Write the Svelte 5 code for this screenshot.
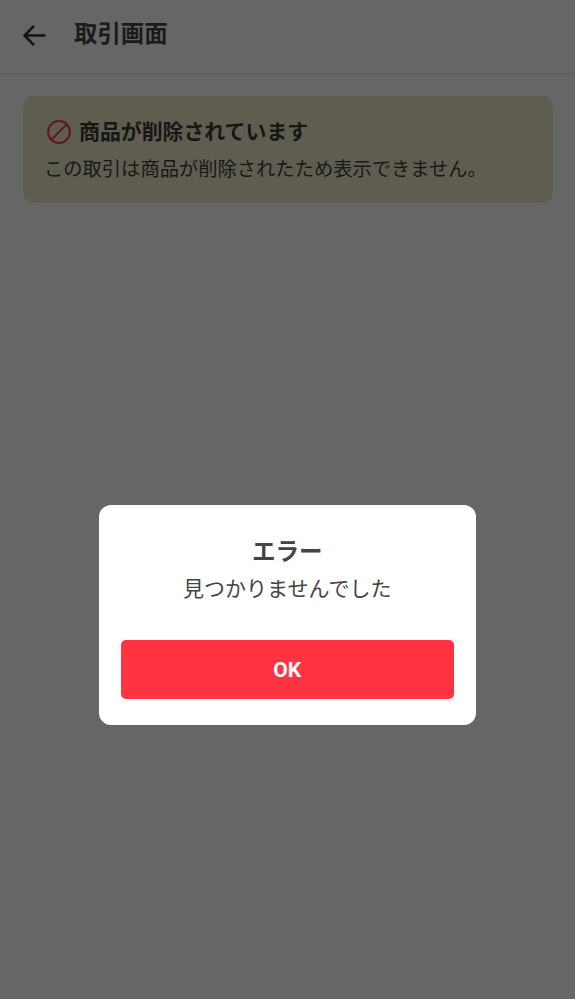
<script lang="ts">
  let showError = $state(true);
</script>

<div class="page">
  <header class="bar">
    <button class="back" aria-label="戻る">
      <svg viewBox="0 0 24 24" width="24" height="24" aria-hidden="true">
        <path d="M22.5 12H2.5M11.5 2.8L2.5 12l9 9.2" />
      </svg>
    </button>
    <h1>取引画面</h1>
  </header>

  <main>
    <section class="notice">
      <div class="notice-head">
        <svg viewBox="0 0 24 24" width="24" height="24" aria-hidden="true">
          <circle cx="12" cy="12" r="10.9" />
          <path d="M4.6 19.4L19.4 4.6" />
        </svg>
        <h2>商品が削除されています</h2>
      </div>
      <p>この取引は商品が削除されたため表示できません。</p>
    </section>
  </main>
</div>

{#if showError}
  <div class="overlay">
    <div class="dialog" role="alertdialog" aria-label="エラー">
      <h3>エラー</h3>
      <p>見つかりませんでした</p>
      <button class="ok" onclick={() => (showError = false)}>OK</button>
    </div>
  </div>
{/if}

<style>
  :global(body) {
    background: #fff;
    font-family: Roboto, "Noto Sans CJK JP", sans-serif;
    color: #444;
  }

  .page {
    min-height: 999px;
  }

  .bar {
    display: flex;
    align-items: center;
    gap: 26px;
    height: 69px;
    padding: 0 22px 4px;
    border-bottom: 1px solid #e6e6e6;
    box-sizing: content-box;
  }
  .back {
    display: flex;
    width: 26px;
    height: 24px;
    padding: 0;
    border: 0;
    background: none;
  }
  .back svg {
    width: 25px;
    height: 25px;
  }
  .back path {
    fill: none;
    stroke: #333;
    stroke-width: 2.6;
  }
  h1 {
    margin: 0;
    font-size: 23.4px;
    font-weight: 700;
    line-height: 1;
    color: #444;
  }

  main {
    padding: 22px 22px 0 23px;
  }
  .notice {
    height: 107px;
    box-sizing: border-box;
    padding: 23px 22px 0;
    border-radius: 11px;
    background: #eee9c6;
  }
  .notice-head {
    display: flex;
    align-items: center;
    gap: 8px;
    height: 26px;
    padding-left: 2px;
  }
  .notice-head svg {
    flex: none;
    fill: none;
    stroke: #f03a4a;
    stroke-width: 2;
  }
  h2 {
    margin: 0;
    font-size: 20.9px;
    font-weight: 700;
    line-height: 26px;
    color: #3a3a3a;
  }
  .notice p {
    margin: 12px 0 0 -1px;
    font-size: 19.3px;
    line-height: 26px;
    white-space: nowrap;
    color: #3f3f3f;
  }

  .overlay {
    position: fixed;
    inset: 0;
    display: flex;
    align-items: center;
    justify-content: center;
    padding-top: 231px;
    background: rgba(0, 0, 0, 0.6);
  }
  .dialog {
    width: 377.5px;
    height: 220px;
    box-sizing: border-box;
    padding: 32px 22.5px 0;
    border-radius: 12px;
    background: #fff;
    text-align: center;
    margin-left: -0.5px;
  }
  h3 {
    margin: 0;
    font-size: 23.5px;
    font-weight: 700;
    line-height: 30px;
    color: #444;
  }
  .dialog p {
    margin: 7px 0 0;
    font-size: 21px;
    line-height: 30px;
    color: #444;
  }
  .ok {
    display: block;
    width: 100%;
    height: 59px;
    margin-top: 36px;
    padding: 0;
    border: 0;
    border-radius: 5px;
    background: #ff3342;
    color: #fff;
    font-family: inherit;
    font-size: 21px;
    font-weight: 700;
  }
</style>
